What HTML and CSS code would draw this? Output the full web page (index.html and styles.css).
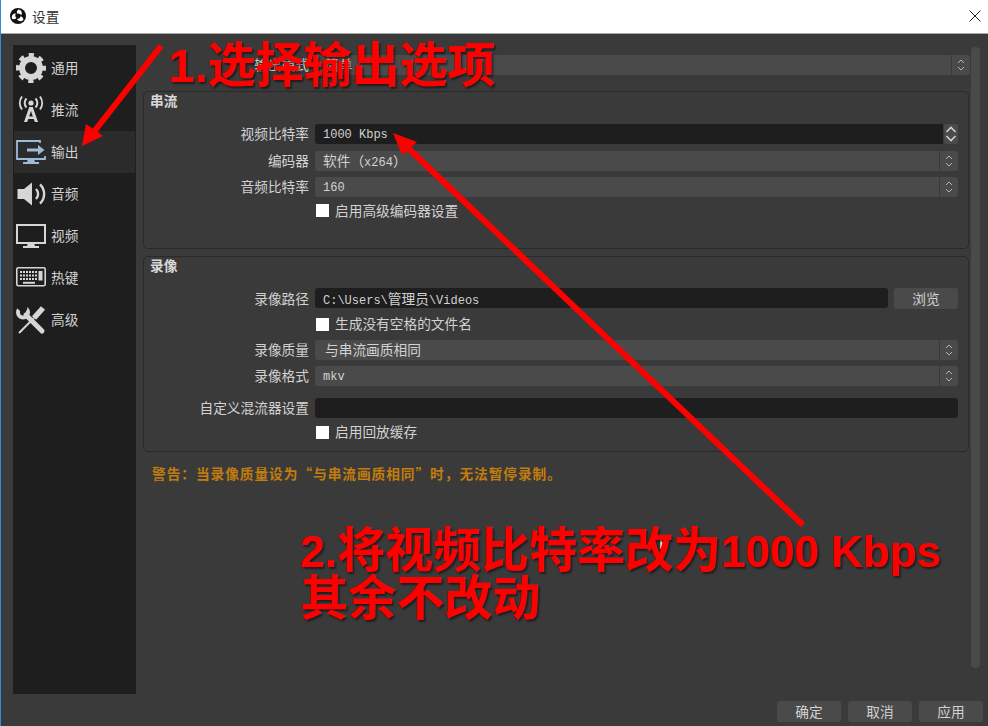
FILE: index.html
```html
<!DOCTYPE html>
<html lang="zh">

<head>
    <meta charset="utf-8">
    <title>设置</title>
    <link rel="stylesheet" href="styles.css">
</head>

<body>
    <div class="window">
        <div class="titlebar">
            <svg class="logo" viewBox="0 0 16 16">
                <circle cx="8" cy="8" r="8" fill="#111"/>
                <g fill="#fff">
                    <path d="M8.500 1.500C11.500 2 12.800 5 11.200 7.300 10.200 5.700 8.500 5 7 5.600 6.500 4 7 2.500 8.500 1.500z"/>
                    <path transform="rotate(120 8 8)" d="M8.500 1.500C11.500 2 12.800 5 11.200 7.300 10.200 5.700 8.500 5 7 5.600 6.500 4 7 2.500 8.500 1.500z"/>
                    <path transform="rotate(240 8 8)" d="M8.500 1.500C11.500 2 12.800 5 11.200 7.300 10.200 5.700 8.500 5 7 5.600 6.500 4 7 2.500 8.500 1.500z"/>
                </g>
            </svg>
            <span class="title">设置</span>
            <svg class="close" viewBox="0 0 12 12"><path d="M.5.5l11 11M11.500.5l-11 11" stroke="#222" fill="none"/></svg>
        </div>

        <div class="panes">
            <ul class="sidebar">
                <li>
                    <svg class="icon" viewBox="0 0 30 30">
                        <circle cx="15" cy="15" r="9" fill="none" stroke="#d6d6d6" stroke-width="6"/>
                        <circle cx="15" cy="15" r="13" fill="none" stroke="#d6d6d6" stroke-width="4" stroke-dasharray="5.200 5"  stroke-dashoffset="2.600"/>
                    </svg>
                    <span>通用</span>
                </li>
                <li>
                    <svg class="icon" viewBox="0 0 30 30">
                        <circle cx="15" cy="8" r="2.600" fill="#d6d6d6"/>
                        <path d="M10.500 3.500a6.500 6.500 0 0 0 0 9M6 1.500a11 11 0 0 0 0 13M19.500 3.500a6.500 6.500 0 0 1 0 9M24 1.500a11 11 0 0 1 0 13" fill="none" stroke="#d6d6d6" stroke-width="2"/>
                        <path d="M13.200 12h3.600l5.200 15h-3.200l-1-3h-5.600l-1 3H8zM13.200 21.500h3.600l-1.800-5.500z" fill="#d6d6d6" fill-rule="evenodd"/>
                    </svg>
                    <span>推流</span>
                </li>
                <li class="active">
                    <svg class="icon" viewBox="0 0 30 30">
                        <path d="M24 6V4H1v18h28v-3" fill="none" stroke="#9dbbd9" stroke-width="1.800"/>
                        <path d="M12 22h6l1 3h4v2H7v-2h4z" fill="#9dbbd9"/>
                        <path d="M11 11.500h11V8l6.500 5-6.500 5v-3.500H11z" fill="#9dbbd9"/>
                    </svg>
                    <span>输出</span>
                </li>
                <li>
                    <svg class="icon" viewBox="0 0 30 30">
                        <path d="M1.500 10h6.500l8-6.500v23L8 20H1.500z" fill="#d6d6d6"/>
                        <path d="M20 10a7 7 0 0 1 0 10M24 5.500a13 13 0 0 1 0 19" fill="none" stroke="#d6d6d6" stroke-width="2.400"/>
                    </svg>
                    <span>音频</span>
                </li>
                <li>
                    <svg class="icon" viewBox="0 0 30 30">
                        <path d="M1 4h28v18H1z" fill="none" stroke="#d6d6d6" stroke-width="2"/>
                        <path d="M12 22h6l1 3h4v2H7v-2h4z" fill="#d6d6d6"/>
                    </svg>
                    <span>视频</span>
                </li>
                <li>
                    <svg class="icon" viewBox="0 0 30 30">
                        <rect x=".8" y="4.800" width="28.400" height="18" rx="1.500" fill="none" stroke="#d6d6d6" stroke-width="1.600"/>
                        <path d="M4 9h17M4 12.500h17M4 16h17" stroke="#d6d6d6" stroke-width="2.200" stroke-dasharray="2 1"/>
                        <path d="M7 19.800h12" stroke="#d6d6d6" stroke-width="2"/>
                        <path d="M22.500 8h4v9.500h-4z" fill="#d6d6d6"/>
                    </svg>
                    <span>热键</span>
                </li>
                <li>
                    <svg class="icon" viewBox="0 0 30 30">
                        <circle cx="7" cy="7.500" r="5" fill="none" stroke="#d6d6d6" stroke-width="4"/>
                        <path d="M4 0L1 3l6 6 4-4 1-6z" fill="#1e1e1e"/>
                        <path d="M10 10l16 16" stroke="#d6d6d6" stroke-width="5" stroke-linecap="round"/>
                        <path d="M27 3l-9 10" stroke="#d6d6d6" stroke-width="5.500"/>
                        <path d="M18 13L3 28" stroke="#d6d6d6" stroke-width="2"/>
                    </svg>
                    <span>高级</span>
                </li>
            </ul>

            <div class="content">
                <div class="row row-top">
                    <label>输出模式</label>
                    <div class="combo"><span class="val cjk">简单</span><span class="arrows"><svg viewBox="0 0 8 14"><path d="M1 5l3-3 3 3M1 9l3 3 3-3" fill="none" stroke="#b5b5b5"/></svg></span></div>
                </div>

                <section class="group group-stream">
                    <h3>串流</h3>
                    <div class="rows">
                        <div class="row">
                            <label>视频比特率</label>
                            <div class="spin">
                                <div class="input"><span class="val">1000 Kbps</span></div>
                                <span class="spin-btn"><svg viewBox="0 0 12 18"><path d="M1.500 7l4.500-4.500L10.500 7M1.500 11l4.500 4.500 4.500-4.500" fill="none" stroke="#d0d0d0" stroke-width="1.600"/></svg></span>
                            </div>
                        </div>
                        <div class="row">
                            <label>编码器</label>
                            <div class="combo"><span class="val"><span class="cjk">软件（</span>x264<span class="cjk">）</span></span><span class="arrows"><svg viewBox="0 0 8 14"><path d="M1 5l3-3 3 3M1 9l3 3 3-3" fill="none" stroke="#b5b5b5"/></svg></span></div>
                        </div>
                        <div class="row">
                            <label>音频比特率</label>
                            <div class="combo"><span class="val">160</span><span class="arrows"><svg viewBox="0 0 8 14"><path d="M1 5l3-3 3 3M1 9l3 3 3-3" fill="none" stroke="#b5b5b5"/></svg></span></div>
                        </div>
                        <div class="row row-check">
                            <span class="box"></span><span class="check-text">启用高级编码器设置</span>
                        </div>
                    </div>
                </section>

                <section class="group group-record">
                    <h3>录像</h3>
                    <div class="rows">
                        <div class="row">
                            <label>录像路径</label>
                            <div class="path-line">
                                <div class="input"><span class="val">C:\Users\<span class="cjk">管理员</span>\Videos</span></div>
                                <button class="btn btn-browse">浏览</button>
                            </div>
                        </div>
                        <div class="row row-check">
                            <span class="box"></span><span class="check-text">生成没有空格的文件名</span>
                        </div>
                        <div class="row">
                            <label>录像质量</label>
                            <div class="combo"><span class="val cjk">与串流画质相同</span><span class="arrows"><svg viewBox="0 0 8 14"><path d="M1 5l3-3 3 3M1 9l3 3 3-3" fill="none" stroke="#b5b5b5"/></svg></span></div>
                        </div>
                        <div class="row">
                            <label>录像格式</label>
                            <div class="combo"><span class="val">mkv</span><span class="arrows"><svg viewBox="0 0 8 14"><path d="M1 5l3-3 3 3M1 9l3 3 3-3" fill="none" stroke="#b5b5b5"/></svg></span></div>
                        </div>
                        <div class="row row-mux">
                            <label>自定义混流器设置</label>
                            <div class="input"></div>
                        </div>
                        <div class="row row-check">
                            <span class="box"></span><span class="check-text">启用回放缓存</span>
                        </div>
                    </div>
                </section>

                <p class="warning">警告：当录像质量设为“与串流画质相同”时，无法暂停录制。</p>
            </div>

            <div class="scrollbar"></div>
        </div>

        <div class="footer">
            <button class="btn">确定</button>
            <button class="btn">取消</button>
            <button class="btn">应用</button>
        </div>
    </div>

    <!-- red notes drawn on top of the screenshot -->
    <svg class="arrows-layer" viewBox="0 0 988 726">
        <path d="M161 46L93 133" stroke="#f00" stroke-width="6" fill="none"/>
        <path d="M82 146l4-22 17 12z" fill="#f00"/>
        <path d="M803 525L408 148" stroke="#f00" stroke-width="6" fill="none"/>
        <path d="M393 133l24 9-15 13z" fill="#f00"/>
        <path d="M660 539v11l3-2.500 2 4 1.500-.8-2-4 3.500-.2z" fill="#fff" stroke="#222" stroke-width=".6"/>
    </svg>
    <div class="note note-one"><span class="note-latin">1.</span>选择输出选项</div>
    <div class="note note-two"><span class="note-latin">2.</span>将视频比特率改为<span class="note-latin">1000 Kbps</span><br>其余不改动</div>
</body>

</html>
```

FILE: styles.css
```css
* {
    box-sizing: border-box;
}

body {
    margin: 0;
    background: #3a3a3a;
    font-family: "Noto Sans CJK SC", "Liberation Sans", sans-serif;
    font-size: 13.7px;
    line-height: 16px;
    color: #d2d2d2;
    overflow: hidden;
}

.window {
    width: 988px;
    height: 726px;
    border-left: 1px solid #2b8fd8;
    display: flex;
    flex-direction: column;
    background: #3a3a3a;
}

.titlebar {
    height: 34px;
    flex: none;
    background: #fff;
    border-bottom: 1px solid #a8a8a8;
    display: flex;
    align-items: center;
    padding: 0 7px 2px 9px;
    color: #333;
}

.logo {
    width: 16px;
    height: 16px;
    margin-right: 6px;
}

.title {
    flex: 1;
}

.close {
    width: 12px;
    height: 12px;
}

.panes {
    height: 660px;
    flex: none;
    display: flex;
    align-items: flex-start;
}

.sidebar {
    list-style-type: none;
    margin: 11px 0 0 12px;
    padding: 2px 1px;
    width: 123px;
    height: 649px;
    flex: none;
    background: #1e1e1e;
}

.sidebar li {
    height: 42px;
    display: flex;
    align-items: center;
    gap: 5px;
    padding-left: 2px;
    color: #d2d2d2;
}

.sidebar li span {
    padding-bottom: 3px;
}

.sidebar li.active {
    background: #2b2b2b;
}

.icon {
    width: 30px;
    height: 30px;
    flex: none;
}

.content {
    width: 826px;
    margin-left: 7px;
    padding-top: 21px;
    flex: none;
}

.scrollbar {
    width: 9px;
    height: 621px;
    margin: 13px 0 0 2px;
    border-radius: 4px;
    background: #4a4a4a;
}

.row {
    display: grid;
    grid-template-columns: 165px 1fr;
    column-gap: 6px;
    height: 20px;
    align-items: center;
}

.row label {
    text-align: right;
    white-space: nowrap;
    padding-bottom: 2px;
}

.row-top {
    margin: 0 -1px 16px 0;
    padding-left: 1px;
}

.group {
    border: 1px solid #2a2a2a;
    border-radius: 5px;
    padding-right: 10px;
    margin-bottom: 7px;
}

.group-stream {
    height: 158px;
}

.group-record {
    height: 196px;
}

.group h3 {
    margin: 0;
    padding-left: 6px;
    height: 32px;
    font-size: 13.7px;
    line-height: 17px;
    font-weight: 700;
    color: #d8d8d8;
}

.group-record h3 {
    height: 31px;
}

.rows {
    display: flex;
    flex-direction: column;
    gap: 6px;
}

.group-stream .rows {
    gap: 6.500px;
}

.row-check {
    display: flex;
    gap: 6px;
    padding-left: 172px;
}

.group-stream .row-check {
    margin-top: -3px;
}

.row-mux + .row-check {
    margin-top: -2px;
}

.check-text {
    padding-bottom: 2px;
}

.box {
    width: 13px;
    height: 13px;
    background: #fff;
    flex: none;
}

.row-mux {
    margin-top: 6px;
}

.combo {
    height: 20px;
    display: flex;
    align-items: center;
    justify-content: space-between;
    background: #4a4a4a;
    border-radius: 3px;
}

.input {
    flex: 1;
    height: 20px;
    display: flex;
    align-items: center;
    background: #1e1e1e;
    border-radius: 3px;
}

.val {
    padding: 2px 0 0 8px;
    font-family: "Liberation Mono", "Noto Sans CJK SC", monospace;
    font-size: 12px;
    white-space: nowrap;
}

.cjk {
    font-family: "Noto Sans CJK SC", sans-serif;
    font-size: 13.7px;
}

.val.cjk {
    padding: 0 0 3px 10px;
}

.arrows {
    width: 19px;
    height: 20px;
    border-left: 1px solid #3a3a3a;
    display: flex;
    align-items: center;
    justify-content: center;
}

.arrows svg {
    width: 8px;
    height: 14px;
}

.spin {
    display: flex;
    gap: 1px;
    height: 20px;
}

.spin .input {
    border-radius: 3px 0 0 3px;
}

.spin-btn {
    width: 14px;
    height: 20px;
    background: #4a4a4a;
    border-radius: 3px;
    display: flex;
    align-items: center;
    justify-content: center;
}

.spin-btn svg {
    width: 12px;
    height: 18px;
}

.path-line {
    display: flex;
    gap: 6px;
}

.btn {
    width: 64px;
    height: 21px;
    padding: 0 0 2px;
    border: 0;
    border-radius: 3px;
    background: #4a4a4a;
    color: #d2d2d2;
    font-family: inherit;
    font-size: 13.7px;
}

.warning {
    margin: 12px 0 0;
    padding-left: 9px;
    height: 18px;
    line-height: 18px;
    color: #c27d0c;
    font-weight: 700;
    letter-spacing: .95px;
    white-space: nowrap;
}

.footer {
    flex: none;
    display: flex;
    justify-content: flex-end;
    gap: 7px;
    padding: 7px 5px 0 0;
}

.arrows-layer {
    position: absolute;
    left: 0;
    top: 0;
    width: 988px;
    height: 726px;
}

.note {
    position: absolute;
    color: #f00;
    font-family: "Liberation Sans", "Noto Sans CJK SC", sans-serif;
    font-size: 48px;
    line-height: 47px;
    font-weight: 700;
    white-space: nowrap;
    text-shadow: 2px 2px 2px rgba(0, 0, 0, .5);
}

.note-latin {
    font-size: 44px;
}

.note-one {
    left: 168px;
    top: 42px;
}

.note-one .note-latin {
    font-size: 47px;
}

.note-two {
    left: 300px;
    top: 527px;
}
```
